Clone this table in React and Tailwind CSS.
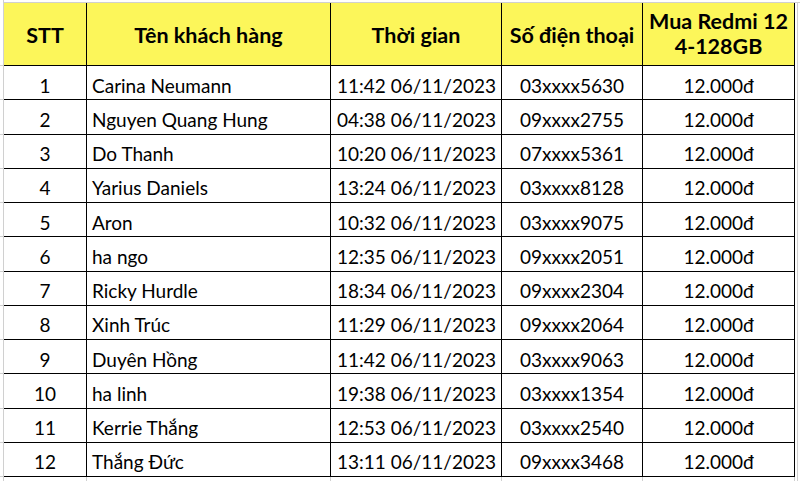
import React from "react";

const rows = [
  ["1", "Carina Neumann", "11:42 06/11/2023", "03xxxx5630"],
  ["2", "Nguyen Quang Hung", "04:38 06/11/2023", "09xxxx2755"],
  ["3", "Do Thanh", "10:20 06/11/2023", "07xxxx5361"],
  ["4", "Yarius Daniels", "13:24 06/11/2023", "03xxxx8128"],
  ["5", "Aron", "10:32 06/11/2023", "03xxxx9075"],
  ["6", "ha ngo", "12:35 06/11/2023", "09xxxx2051"],
  ["7", "Ricky Hurdle", "18:34 06/11/2023", "09xxxx2304"],
  ["8", "Xinh Trúc", "11:29 06/11/2023", "09xxxx2064"],
  ["9", "Duyên Hồng", "11:42 06/11/2023", "03xxxx9063"],
  ["10", "ha linh", "19:38 06/11/2023", "03xxxx1354"],
  ["11", "Kerrie Thắng", "12:53 06/11/2023", "03xxxx2540"],
  ["12", "Thắng Đức", "13:11 06/11/2023", "09xxxx3468"],
];

const cols = "grid grid-cols-[83px_244px_171px_141px_152px]";

export default function App() {
  return (
    <div
      className="w-[800px] h-[481px] bg-white overflow-hidden flex flex-col text-black"
      style={{ fontFamily: "Lato, 'Noto Sans', sans-serif" }}
    >
      {/* top gridline strip */}
      <div className="h-[3px] shrink-0 flex">
        <div className="w-[4px] h-full border-r border-[#d0d0d0]" />
        <div className="flex-1 border-b border-[#d0d0d0]" />
      </div>
      <div className="flex">
        {/* left gutter */}
        <div className="w-[4px] flex flex-col border-r border-[#d0d0d0]">
          <div className="h-[63px] border-b border-[#d0d0d0]" />
          {rows.map((r) => (
            <div key={r[0]} className="h-[34.25px] border-b border-[#d0d0d0]" />
          ))}
        </div>
        <div className="flex flex-col">
          {/* header */}
          <div className={`${cols} h-[63px] bg-[#fcf65a] font-bold text-[21.5px] leading-[25px]`}>
            <div className="border-r border-b border-black flex items-center justify-center pt-[2px]">STT</div>
            <div className="border-r border-b border-black flex items-center justify-center pt-[2px]">Tên khách hàng</div>
            <div className="border-r border-b border-black flex items-center justify-center pt-[2px]">Thời gian</div>
            <div className="border-r border-b border-black flex items-center justify-center pt-[2px]">Số điện thoại</div>
            <div className="border-r border-b border-black flex flex-col items-center justify-center text-center">
              <span>Mua Redmi 12</span>
              <span>4-128GB</span>
            </div>
          </div>
          {rows.map((r) => (
            <div key={r[0]} className={`${cols} h-[34.25px] text-[19px] leading-[24px]`}>
              <div className="border-r border-b border-black flex items-center justify-center pt-[6px]">{r[0]}</div>
              <div className="border-r border-b border-black flex items-center pl-[5px] pt-[6px]">{r[1]}</div>
              <div className="border-r border-b border-black flex items-center pl-[6px] pt-[6px]">{r[2]}</div>
              <div className="border-r border-b border-black flex items-center justify-center pt-[6px]">{r[3]}</div>
              <div className="border-r border-b border-black flex items-center justify-center pt-[6px]">12.000đ</div>
            </div>
          ))}
          {/* bottom gridline strip */}
          <div className={`${cols} h-[4px]`}>
            <div className="border-r border-[#d0d0d0]" />
            <div className="border-r border-[#d0d0d0]" />
            <div className="border-r border-[#d0d0d0]" />
            <div className="border-r border-[#d0d0d0]" />
            <div className="border-r border-[#d0d0d0]" />
          </div>
        </div>
        {/* right gutter */}
        <div className="w-[3px] border-r border-[#d0d0d0]" />
      </div>
    </div>
  );
}
